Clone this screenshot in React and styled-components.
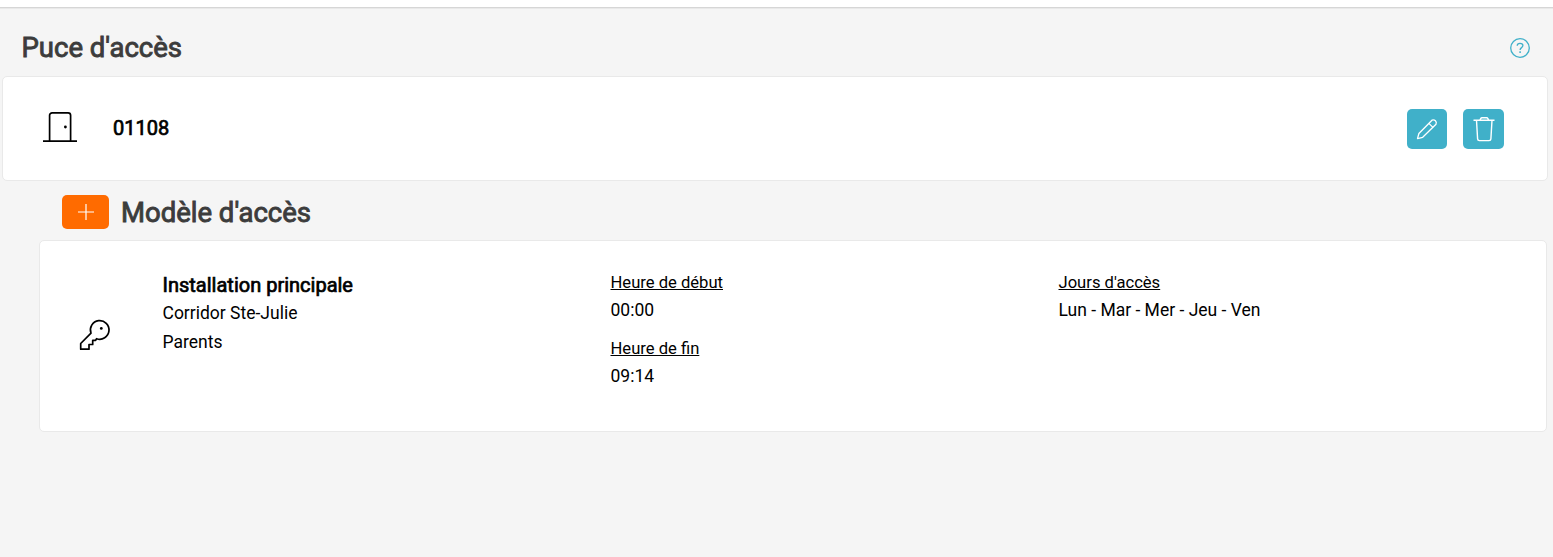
import styled, { createGlobalStyle } from 'styled-components';

const App = () => {
	return (
		<Page>
			<GlobalStyle />
			<TopBar />
			<Header>
				<Title>Puce d'accès</Title>
				<HelpButton aria-label="Aide">
					<HelpIcon />
				</HelpButton>
			</Header>
			<ChipCard>
				<DoorIcon />
				<ChipNumber>01108</ChipNumber>
				<ActionButton aria-label="Modifier">
					<PencilIcon />
				</ActionButton>
				<ActionButton $wide aria-label="Supprimer">
					<TrashIcon />
				</ActionButton>
			</ChipCard>
			<SubHeader>
				<AddButton aria-label="Ajouter">
					<PlusIcon />
				</AddButton>
				<Title>Modèle d'accès</Title>
			</SubHeader>
			<ModelCard>
				<KeyCell>
					<KeyIcon />
				</KeyCell>
				<Column>
					<ModelName>Installation principale</ModelName>
					<Line>Corridor Ste-Julie</Line>
					<Line>Parents</Line>
				</Column>
				<Column>
					<Field label="Heure de début" value="00:00" />
					<Field label="Heure de fin" value="09:14" />
				</Column>
				<Column>
					<Field label="Jours d'accès" value="Lun - Mar - Mer - Jeu - Ven" />
				</Column>
			</ModelCard>
		</Page>
	);
};

const Field = (props) => {
	return (
		<FieldBox>
			<FieldLabel>{props.label}</FieldLabel>
			<FieldValue>{props.value}</FieldValue>
		</FieldBox>
	);
};

const HelpIcon = () => (
	<svg width="20" height="20" viewBox="0 0 20 20" fill="none" stroke="currentColor" strokeWidth="1.3">
		<circle cx="10" cy="10" r="9.3" />
		<path d="M7.2 7.7C7.2 6.200 8.400 5.400 10 5.400s2.900.8 2.900 2.200c0 2.100-2.800 2-2.800 4.300" />
		<path d="M10.100 13.300v1.600" strokeWidth="1.500" />
	</svg>
);

const DoorIcon = () => (
	<svg width="34" height="32" viewBox="0 0 34 32" fill="none" stroke="currentColor" strokeWidth="1.700">
		<path d="M0 30.200h34M6.600 30V4.300a2.500 2.500 0 0 1 2.500-2.500h16a2.500 2.500 0 0 1 2.500 2.500V30" />
		<circle cx="22.400" cy="16" r="1.400" fill="currentColor" stroke="none" />
	</svg>
);

const KeyIcon = () => (
	<svg width="34" height="34" viewBox="0 0 34 34" fill="none" stroke="currentColor" strokeWidth="1.700">
		<path
			d="M13 15.200A9.300 9.300 0 1 1 18.600 20.700L17.600 22.300H14.700V26.500H11V31.200H2.700V25.500L13 15.200Z"
			strokeLinejoin="round"
		/>
		<circle cx="23.300" cy="10.400" r="1.400" fill="currentColor" stroke="none" />
	</svg>
);

const PencilIcon = () => (
	<svg width="22" height="22" viewBox="0 0 22 22" fill="none" stroke="currentColor" strokeWidth="1.300">
		<path d="M1.500 20.700 2.900 15.500 16 2.200a3 3 0 0 1 4 4L6.700 19.300Z" strokeLinejoin="round" />
		<path d="m12.800 5.400 4.200 4" />
	</svg>
);

const TrashIcon = () => (
	<svg width="22" height="26" viewBox="0 0 22 26" fill="none" stroke="currentColor" strokeWidth="1.400">
		<path d="M.5 4.300h21M6.900 4.100 7.700 2.600a1.500 1.500 0 0 1 1.300-.8h4.600a1.500 1.500 0 0 1 1.300.8l.8 1.500" />
		<path d="m3.500 4.300 1.100 18.600a1.800 1.800 0 0 0 1.800 1.700h9.700a1.800 1.800 0 0 0 1.800-1.700L19 4.300" />
	</svg>
);

const PlusIcon = () => (
	<svg width="16" height="16" viewBox="0 0 16 16" stroke="currentColor" strokeWidth="1.2">
		<path d="M8 0v16M0 8h16" />
	</svg>
);

const GlobalStyle = createGlobalStyle`
	body {
		margin: 0;
		background: #f5f5f5;
		color: #000;
		font-family: Roboto, sans-serif;
		font-size: 17.5px;
	}
	* {
		box-sizing: border-box;
	}
`;

const Page = styled.div`
	min-height: 557px;
`;

const TopBar = styled.div`
	height: 8px;
	margin-bottom: 1px;
	background: #fff;
	border-bottom: 1px solid #d6d6d6;
	box-shadow: 0 1px 0 #e9e9e9;
`;

const Header = styled.div`
	display: flex;
	align-items: center;
	justify-content: space-between;
	height: 67px;
	padding: 10px 23px 0 21.5px;
`;

const Title = styled.h1`
	margin: 0;
	color: #3c3c3c;
	font-size: 27.5px;
	font-weight: 400;
	line-height: 34px;
	-webkit-text-stroke: 0.9px currentColor;
`;

const HelpButton = styled.button`
	display: flex;
	padding: 0;
	border: 0;
	background: none;
	color: #40b0c9;
`;

const Card = styled.div`
	display: flex;
	background: #fff;
	border: 1px solid #e9e9e9;
	border-radius: 5px;
`;

const ChipCard = styled(Card)`
	align-items: center;
	height: 105px;
	margin: 0 5px 0 2px;
	padding: 0 43px 0 40px;

	> svg {
		margin-bottom: 3px;
	}
`;

const ChipNumber = styled.p`
	flex: 1;
	margin: 0 0 1px 36px;
	font-size: 20px;
	-webkit-text-stroke: 0.7px currentColor;
`;

const ActionButton = styled.button`
	display: flex;
	align-items: center;
	justify-content: center;
	width: ${(props) => (props.$wide ? '41px' : '40px')};
	height: 40px;
	margin-left: ${(props) => (props.$wide ? '16px' : '0')};
	padding: 0;
	border: 0;
	border-radius: 5px;
	background: #40b0c9;
	color: #fff;
`;

const SubHeader = styled.div`
	display: flex;
	align-items: center;
	gap: 12px;
	height: 59px;
	padding: 3px 0 0 62px;

	${Title} {
		margin-top: 2px;
	}
`;

const AddButton = styled.button`
	display: flex;
	align-items: center;
	justify-content: center;
	width: 47px;
	height: 34px;
	padding: 0;
	border: 0;
	border-radius: 5px;
	background: #ff6b00;
	color: #fff;
`;

const ModelCard = styled(Card)`
	height: 192px;
	margin: 0 6px 0 39px;
	padding: 28px 16px 0 37.5px;
`;

const KeyCell = styled.div`
	width: 85px;
	padding-top: 49px;
`;

const Column = styled.div`
	width: 448px;
	line-height: 28.5px;
`;

const ModelName = styled.p`
	margin: 2px 0 0;
	font-size: 20px;
	line-height: 28px;
	-webkit-text-stroke: 0.7px currentColor;
`;

const Line = styled.p`
	margin: 0;
`;

const FieldBox = styled.div`
	margin-bottom: 11.7px;
`;

const FieldLabel = styled(Line)`
	font-size: 16.6px;
	line-height: 27.9px;
	text-decoration: underline;
`;

const FieldValue = styled(Line)`
	line-height: 26.6px;
`;

export default App;
